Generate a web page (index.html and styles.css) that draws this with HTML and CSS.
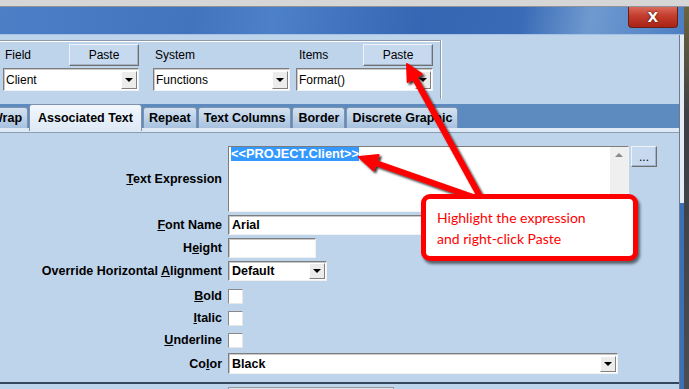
FILE: index.html
```html
<!DOCTYPE html>
<html lang="en">
<head>
    <meta charset="UTF-8">
    <title>Associated Text</title>
    <link rel="stylesheet" href="styles.css">
</head>
<body>
    <div class="bg-strip"></div>
    <div class="desk">
        <div class="window">
            <div class="titlebar"><span class="close">X</span></div>
            <div class="winbody">
                <div class="client">
                    <div class="toolbar">
                        <div class="group">
                            <div class="col col-field">
                                <div class="col-head"><span>Field</span><button class="btn">Paste</button></div>
                                <div class="combo"><span>Client</span><i class="drop"></i></div>
                            </div>
                            <div class="col col-system">
                                <div class="col-head"><span>System</span></div>
                                <div class="combo"><span>Functions</span><i class="drop"></i></div>
                            </div>
                            <div class="col col-items">
                                <div class="col-head"><span>Items</span><button class="btn">Paste</button></div>
                                <div class="combo"><span>Format()</span><i class="drop"></i></div>
                            </div>
                        </div>
                    </div>

                    <div class="tabs">
                        <div class="tab tab-wrap">Wrap</div>
                        <div class="tab active">Associated Text</div>
                        <div class="tab">Repeat</div>
                        <div class="tab">Text Columns</div>
                        <div class="tab">Border</div>
                        <div class="tab">Discrete Graphic</div>
                    </div>
                    <div class="tabstrip"></div>

                    <div class="form">
                        <div class="row row-te">
                            <label><u>T</u>ext Expression</label>
                            <div class="te">
                                <div class="te-text"><span class="sel">&lt;&lt;PROJECT.Client&gt;&gt;</span></div>
                                <div class="scroll"><i class="up"></i></div>
                            </div>
                            <button class="btn more">...</button>
                        </div>
                        <div class="row">
                            <label><u>F</u>ont Name</label>
                            <div class="field w-font">Arial</div>
                        </div>
                        <div class="row">
                            <label>H<u>e</u>ight</label>
                            <div class="field w-height"></div>
                        </div>
                        <div class="row">
                            <label>Override Horizontal <u>A</u>lignment</label>
                            <div class="field combo-field w-align"><span>Default</span><i class="drop"></i></div>
                        </div>
                        <div class="row row-check first-check">
                            <label><u>B</u>old</label>
                            <div class="check"></div>
                        </div>
                        <div class="row row-check">
                            <label><u>I</u>talic</label>
                            <div class="check"></div>
                        </div>
                        <div class="row row-check">
                            <label><u>U</u>nderline</label>
                            <div class="check"></div>
                        </div>
                        <div class="row row-color">
                            <label>Co<u>l</u>or</label>
                            <div class="field combo-field w-color"><span>Black</span><i class="drop"></i></div>
                        </div>
                    </div>

                    <div class="footer"><div class="footbtn"></div></div>
                </div>
                <div class="frame"></div>
            </div>
        </div>
        <div class="edge"></div>
    </div>

    <!-- annotation on top of the screenshot -->
    <svg class="arrows" width="689" height="389" viewBox="0 0 689 389">
        <defs>
            <filter id="sh" x="-20%" y="-20%" width="140%" height="140%">
                <feDropShadow dx="2" dy="2" stdDeviation="1.3" flood-color="#000" flood-opacity="0.8"/>
            </filter>
        </defs>
        <g filter="url(#sh)" fill="#ff0000" stroke="#ff0000" stroke-linecap="round" stroke-linejoin="round">
            <line x1="482" y1="200" x2="414.7" y2="78" stroke-width="6"/>
            <polygon points="407,64 421.7,74.1 407.7,81.9" stroke-width="2"/>
            <line x1="476" y1="198" x2="376" y2="163" stroke-width="6"/>
            <polygon points="359,157 378.6,155.1 373.5,170.3" stroke-width="2"/>
        </g>
    </svg>
    <div class="callout">Highlight the expression<br>and right-click Paste</div>
</body>
</html>
```

FILE: styles.css
```css
* {
    box-sizing: border-box;
}

body {
    margin: 0;
    width: 689px;
    height: 389px;
    overflow: hidden;
    position: relative;
    font-family: "Liberation Sans", Arial, sans-serif;
    font-size: 12px;
    color: #000;
    background: #d4d4d4;
}

.bg-strip {
    height: 7px;
    background: #d6d6d6;
    border-bottom: 1px solid #8f9399;
}

.desk {
    display: flex;
    height: 382px;
}

.window {
    width: 684px;
    display: flex;
    flex-direction: column;
}

.edge {
    flex: 1;
    background: linear-gradient(#6b6440, #3b3f45 30%, #4a4d52);
}

/* title bar */
.titlebar {
    flex: none;
    height: 28px;
    display: flex;
    justify-content: flex-end;
    padding-right: 6px;
    background: linear-gradient(100deg, #4b7fc6 0%, #4274bd 28%, #4c80c7 40%, #3466b3 62%, #3a6bb6 76%, #6f9ad0 86%, #4c7ec3 100%);
    border-bottom: 1px solid #a6c1e4;
}

.close {
    width: 50px;
    height: 21px;
    display: flex;
    align-items: center;
    justify-content: center;
    background: linear-gradient(#d86a5c, #c33c2c 45%, #a92416);
    border: 1px solid #6b1d15;
    border-top: none;
    border-radius: 0 0 4px 4px;
    color: #fff;
    font-family: "DejaVu Sans", sans-serif;
    font-weight: bold;
    font-size: 14px;
    text-shadow: 0 0 2px #4a0c05, 0 0 1px #4a0c05;
}

.winbody {
    flex: 1;
    min-height: 0;
    display: flex;
}

.client {
    width: 680px;
    overflow: hidden;
    background: #bed4eb;
    border-right: 1px solid #6d7d90;
    display: flex;
    flex-direction: column;
}

.frame {
    flex: 1;
    background: linear-gradient(#e4ecf5 0, #e4ecf5 168px, #3d6fb6 168px);
}

/* top group with the paste helpers */
.toolbar {
    flex: none;
    height: 65px;
    padding-top: 5px;
}

.group {
    width: 441px;
    height: 59px;
    display: flex;
    padding: 3px 0 0 3px;
    border-top: 1px solid #8b99aa;
    border-right: 1px solid #8b99aa;
    box-shadow: inset 0 1px 0 #fff, 1px 0 0 #fff;
}

.col {
    display: flex;
    flex-direction: column;
    gap: 2px;
}

.col-field {
    width: 136px;
}

.col-system {
    width: 137px;
    margin-left: 14px;
}

.col-items {
    width: 137px;
    margin-left: 6px;
}

.col-head {
    height: 22px;
    display: flex;
    align-items: center;
    justify-content: space-between;
}

.col-head span {
    padding-left: 2px;
}

.col-items .col-head span {
    padding-left: 3px;
}

.btn {
    width: 70px;
    height: 22px;
    padding: 0;
    font-family: inherit;
    font-size: 12px;
    color: #000;
    background: #c6d9ee;
    border: 1px solid;
    border-color: #eef3f9 #6f6f6f #6f6f6f #eef3f9;
    box-shadow: inset -1px -1px 0 #a3b3c5;
}

.combo,
.field {
    background: #fff;
    border: 1px solid;
    border-color: #7d7d7d #f2f2f2 #f2f2f2 #7d7d7d;
    box-shadow: inset 1px 1px 0 #c9c9c9;
}

.combo {
    height: 23px;
    display: flex;
    align-items: center;
    justify-content: space-between;
    padding: 0 1px 0 2px;
}

.drop {
    width: 16px;
    height: 18px;
    background: #ececec;
    border: 1px solid;
    border-color: #fff #808080 #808080 #fff;
    display: flex;
    align-items: center;
    justify-content: center;
}

.drop::after {
    content: "";
    border-left: 4px solid transparent;
    border-right: 4px solid transparent;
    border-top: 4px solid #000;
}

/* tabs */
.tabs {
    flex: none;
    height: 28px;
    display: flex;
    align-items: flex-end;
    background: linear-gradient(#bed4eb 0, #bed4eb 4px, #5d8bbf 4px);
}

.tab {
    height: 21px;
    padding: 0 5px;
    margin-right: 1px;
    display: flex;
    align-items: center;
    font-weight: bold;
    font-size: 12.5px;
    white-space: nowrap;
    border: 1px solid #7d93ad;
    border-bottom: none;
    border-radius: 3px 3px 0 0;
    background: linear-gradient(#d4e2f1, #a7c1de);
}

.tab-wrap {
    margin-left: -15px;
}

.tab.active {
    height: 27px;
    margin-bottom: -3px;
    padding: 0 8px;
    position: relative;
    z-index: 1;
    background: linear-gradient(#f2f7fc, #dde9f6);
}

.tabstrip {
    flex: none;
    height: 5px;
    background: #dde9f5;
    border-bottom: 1px solid #8c9db1;
}

/* property form */
.form {
    flex: none;
    padding-top: 13px;
    display: flex;
    flex-direction: column;
}

.row {
    height: 20px;
    margin-top: 3px;
    display: flex;
    align-items: center;
}

.row label {
    flex: none;
    width: 222px;
    margin-right: 6px;
    text-align: right;
    font-weight: bold;
    font-size: 12.5px;
}

.row-te {
    height: 66px;
    margin-top: 0;
}

.te {
    width: 401px;
    height: 66px;
    display: flex;
    background: #fff;
    border: 1px solid;
    border-color: #7d7d7d #f2f2f2 #f2f2f2 #7d7d7d;
}

.te-text {
    flex: 1;
    padding: 0 2px;
    align-self: flex-start;
}

.sel {
    display: inline-block;
    line-height: 14px;
    font-weight: bold;
    font-size: 12.8px;
    color: #fff;
    background: #3399ff;
}

.scroll {
    width: 18px;
    background: #efefef;
    display: flex;
    justify-content: center;
    padding-top: 6px;
}

.up {
    width: 0;
    height: 0;
    border-left: 4px solid transparent;
    border-right: 4px solid transparent;
    border-bottom: 4px solid #8a8a8a;
}

.more {
    width: 26px;
    height: 21px;
    margin-left: 2px;
    align-self: flex-start;
    line-height: 14px;
}

.field {
    height: 20px;
    padding: 0 3px;
    display: flex;
    align-items: center;
    font-weight: bold;
    font-size: 12.5px;
}

.combo-field {
    justify-content: space-between;
    padding-right: 1px;
}

.combo-field .drop {
    height: 16px;
}

.w-font {
    width: 401px;
}

.w-height {
    width: 88px;
}

.w-align {
    width: 99px;
}

.w-color {
    width: 390px;
    height: 21px;
}

.row-check {
    height: 22px;
    margin-top: 0;
}

.first-check {
    margin-top: 4px;
}

.check {
    width: 15px;
    height: 15px;
    background: #fff;
    border: 1px solid;
    border-color: #8a8a8a #e6e6e6 #e6e6e6 #8a8a8a;
}

.row-color {
    height: 21px;
    margin-top: 2px;
}

.footer {
    flex: none;
    height: 20px;
    margin-top: 8px;
    border-top: 2px solid #34465a;
    padding: 3px 0 0 228px;
}

.footbtn {
    width: 166px;
    height: 14px;
    border: 1px solid #9a9a9a;
    background: #d9e3ee;
}

/* annotation */
.arrows {
    position: absolute;
    left: 0;
    top: 0;
    pointer-events: none;
}

.callout {
    position: absolute;
    left: 421px;
    top: 194px;
    width: 217px;
    height: 67px;
    padding: 8px 0 0 11px;
    background: #fff;
    border: 5px solid #ff0000;
    border-radius: 9px;
    box-shadow: 2px 3px 3px rgba(0, 0, 0, 0.55);
    color: #ff0000;
    font-family: Lato, "Open Sans", sans-serif;
    font-size: 14px;
    line-height: 21px;
}
```
